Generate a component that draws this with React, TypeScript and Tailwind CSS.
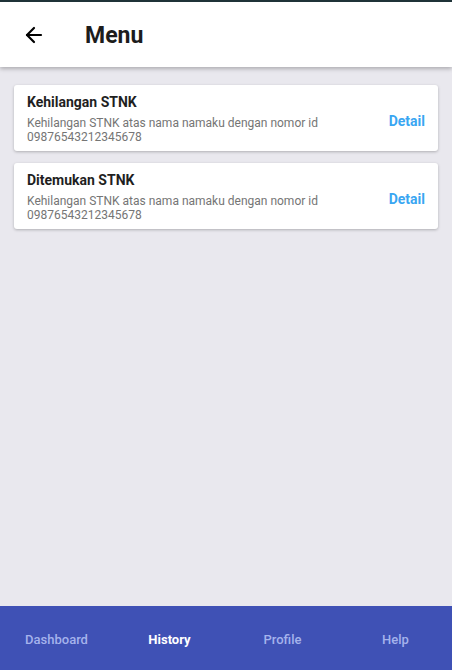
import { ArrowLeft } from 'lucide-react';

const items = [
  { title: 'Kehilangan STNK', desc: 'Kehilangan STNK atas nama namaku dengan nomor id 09876543212345678' },
  { title: 'Ditemukan STNK', desc: 'Kehilangan STNK atas nama namaku dengan nomor id 09876543212345678' },
];

const tabs = ['Dashboard', 'History', 'Profile', 'Help'];

export default function App() {
  return (
    <div className="flex h-[670px] w-[452px] flex-col bg-[#e9e8ee] font-['Roboto',sans-serif]">
      {/* Header */}
      <div className="relative z-10 border-t-2 border-[#1f3338] bg-white shadow-[0_2px_4px_rgba(0,0,0,0.25)]">
        <div className="flex h-[65px] items-center">
          <ArrowLeft className="ml-[22px] h-6 w-6 text-black" strokeWidth={2.2} />
          <h1 className="ml-[39px] pt-[4px] text-[23px] font-bold text-[#1c1c1c]">Menu</h1>
        </div>
      </div>

      {/* List */}
      <div className="flex flex-1 flex-col gap-[12px] px-[14px] pt-[18px]">
        {items.map((item) => (
          <div
            key={item.title}
            className="flex items-center rounded-[3px] bg-white pb-[7px] pl-[13px] pr-[13px] pt-[8px] shadow-[0_1px_3px_rgba(0,0,0,0.25)]"
          >
            <div className="flex-1">
              <div className="text-[14px] font-bold leading-[18px] text-[#1f1f1f]">{item.title}</div>
              <div className="mt-[5px] w-[300px] text-[12px] leading-[14px] text-[#757575]">{item.desc}</div>
            </div>
            <span className="pt-[6px] text-[14px] font-bold text-[#3aa6f2]">Detail</span>
          </div>
        ))}
      </div>

      {/* Bottom nav */}
      <div className="grid h-[64px] grid-cols-4 items-center bg-[#3f51b5] pt-[4px]">
        {tabs.map((t) => (
          <div
            key={t}
            className={
              t === 'History'
                ? 'text-center text-[13px] font-bold text-white'
                : 'text-center text-[13px] font-medium text-[#a5b3ec]'
            }
          >
            {t}
          </div>
        ))}
      </div>
    </div>
  );
}
